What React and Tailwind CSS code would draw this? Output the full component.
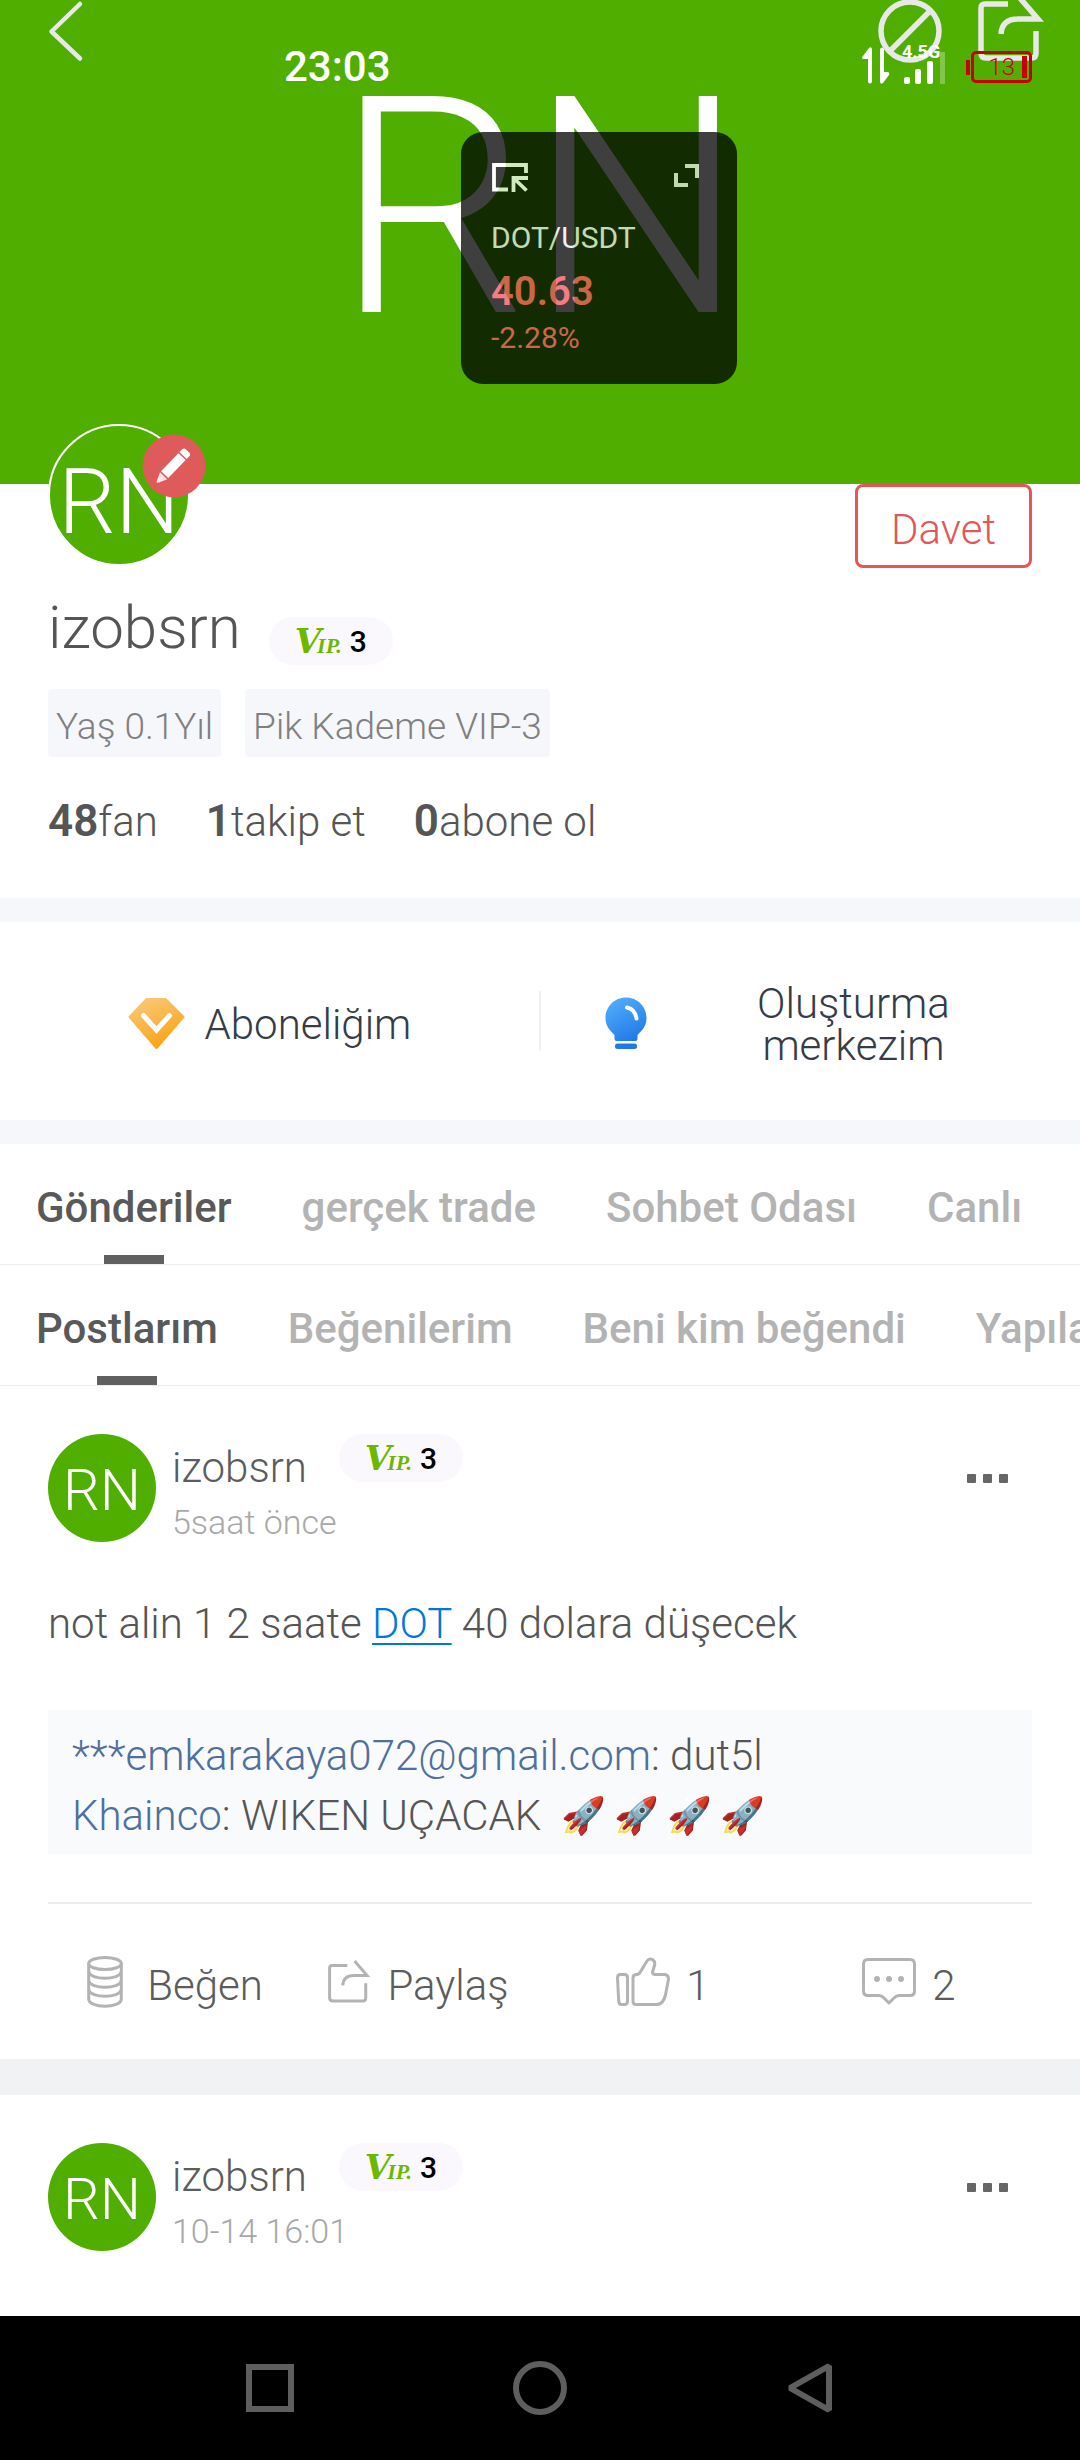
import React from "react";

function ShareIcon({ className, strokeWidth }) {
  return (
    <svg viewBox="0 -6 70 66" className={className} fill="none" stroke="currentColor" strokeWidth={strokeWidth} strokeLinejoin="round" aria-hidden="true">
      <path d="M34 2H11Q7 2 7 6V51Q7 56 12 56H58Q62 56 62 51V29" />
      <path d="M45 -5L64 17H44Q28 17 27 32" strokeLinejoin="miter" />
    </svg>
  );
}

function VipPill({ className = "" }) {
  return (
    <span className={`flex h-12 w-[124px] shrink-0 items-center justify-center gap-2 rounded-3xl bg-[#faf8fc] ${className}`}>
      <span className="flex items-baseline leading-none font-bold text-[#6cb800] italic">
        <span className="font-['DejaVu_Serif',serif] text-[34px] leading-none">V</span>
        <span className="-ml-1 font-['Liberation_Serif',serif] text-[22px] leading-none">IP.</span>
      </span>
      <span className="pt-[2px] text-[30px] leading-none font-medium text-black">3</span>
    </span>
  );
}

function TabRow({ label, tabs }) {
  return (
    <nav aria-label={label} className="flex h-[121px] gap-[70px] overflow-hidden border-b border-[#ececec] px-9">
      {tabs.map((tab, i) => (
        <button
          key={tab}
          type="button"
          className={
            i === 0
              ? "relative flex shrink-0 items-center pt-[6px] text-[42px] font-medium whitespace-nowrap text-[#595959]"
              : "relative flex shrink-0 items-center pt-[6px] text-[42px] font-medium whitespace-nowrap text-[#b3b3b3]"
          }
        >
          {tab}
          {i === 0 && <span className="absolute bottom-0 left-1/2 h-[9px] w-[60px] -translate-x-1/2 bg-[#606060]" />}
        </button>
      ))}
    </nav>
  );
}

function PostHeader({ time }) {
  return (
    <div className="flex items-start gap-4">
      <div className="flex size-[108px] shrink-0 items-center justify-center rounded-full bg-[#4fae00] pt-1 text-[58px] text-white">RN</div>
      <div className="flex min-w-0 flex-1 flex-col">
        <div className="flex items-start gap-8">
          <h2 className="pt-[10px] text-[42px] leading-[48px] text-[#5c5c5c]">izobsrn</h2>
          <VipPill />
        </div>
        <time className="mt-[10px] text-[34px] leading-10 text-[#a8a8a8]">{time}</time>
      </div>
      <button type="button" aria-label="Daha fazla" className="mt-10 mr-6 flex gap-[7px]">
        <span className="size-[9px] rounded-[1px] bg-[#666]" />
        <span className="size-[9px] rounded-[1px] bg-[#666]" />
        <span className="size-[9px] rounded-[1px] bg-[#666]" />
      </button>
    </div>
  );
}

function CoinsIcon() {
  return (
    <svg viewBox="0 0 36 52" className="mr-2 ml-2 h-[52px] w-9" fill="none" stroke="currentColor" strokeWidth="3" aria-hidden="true">
      <ellipse cx="18" cy="7.5" rx="16.3" ry="6" />
      <path d="M1.7 7.5V43C1.7 52.5 34.3 52.5 34.3 43V7.5" />
      <path d="M1.7 15.5C3 24.5 33 24.5 34.3 15.5M1.7 24.5C3 33.5 33 33.5 34.3 24.5M1.7 33.5C3 42.5 33 42.5 34.3 33.5" />
    </svg>
  );
}

function ThumbIcon() {
  return (
    <svg viewBox="0 0 54 50" className="h-[50px] w-[54px]" fill="none" stroke="currentColor" strokeWidth="3" strokeLinejoin="round" aria-hidden="true">
      <path d="M4.5 17.5H8.5Q11.5 17.5 11.5 20.5V44Q11.5 47.5 8.5 47.5H5.5Q3 47.5 2.7 44L1.5 21Q1.5 17.5 4.5 17.5Z" />
      <path d="M17 21Q17 18 20 17.5Q23 17.5 24 15.5L31 4Q33 1 36.5 2.5Q39.5 4.5 38.5 8.5L36.5 15Q36.5 17.5 39 17.5H49Q52.5 18 52.5 22L49.5 38Q47 47.5 41 47.5H20Q17 47.5 17 44Z" />
    </svg>
  );
}

function CommentIcon() {
  return (
    <svg viewBox="0 0 54 48" className="h-12 w-[54px]" aria-hidden="true">
      <path d="M6 1.5H48Q52.5 1.5 52.5 6V33Q52.5 37.5 48 37.5H37Q34.5 37.5 32 40L27 45L22 40Q19.5 37.5 17 37.5H6Q1.5 37.5 1.5 33V6Q1.5 1.5 6 1.5Z" fill="none" stroke="currentColor" strokeWidth="3" strokeLinejoin="round" />
      <g fill="currentColor">
        <circle cx="15" cy="21" r="3" />
        <circle cx="27" cy="21" r="3" />
        <circle cx="39" cy="21" r="3" />
      </g>
    </svg>
  );
}

function PostAction({ icon, label }) {
  return (
    <button type="button" className="flex flex-1 items-center justify-center gap-4 text-[#b3b3b3]">
      {icon}
      <span className="pt-2 text-[42px] leading-[48px] text-[#5c5c5c]">{label}</span>
    </button>
  );
}

function StatusBar() {
  return (
    <div className="absolute inset-x-0 top-10 flex items-center justify-between pr-12 pl-[284px] text-white">
      <time className="text-[42px] leading-[54px] font-medium">23:03</time>
      <div className="flex items-center gap-5">
        <div className="-mt-2 flex items-end gap-3">
          <svg viewBox="0 0 28 37" className="h-[37px] w-7" fill="currentColor" aria-hidden="true">
            <path d="M6 35V12H1Q-1 11 1 9L7 1Q10 -1 10 3V35Q8 38 6 35Z" />
            <path d="M18 2V34Q18 38 21 36L27 28Q28 26 26 25H22V2Q20 -1 18 2Z" />
          </svg>
          <div className="flex flex-col">
            <span className="text-[18px] leading-[18px] font-bold">4.5G</span>
            <svg viewBox="0 0 44 32" className="-mt-[9px] h-8 w-11" fill="currentColor" aria-hidden="true">
              <rect x="2" y="25" width="6" height="7" rx="2" />
              <rect x="13" y="17" width="6" height="15" rx="2" />
              <rect x="25" y="9" width="6" height="23" rx="2" />
              <rect x="38" y="0" width="5" height="32" rx="1" opacity="0.3" />
            </svg>
          </div>
        </div>
        <div className="flex items-center text-[#c80000]">
          <span className="h-[15px] w-1 bg-[#c80000]" />
          <span className="ml-[1px] flex h-8 w-[61px] items-center justify-end gap-[7px] rounded-[5px] border-[3px] border-[#c80000] pr-[2px] text-[24px] leading-none">
            13
            <span className="h-[22px] w-[5px] bg-[#c80000]" />
          </span>
        </div>
      </div>
    </div>
  );
}

function PriceWidget() {
  return (
    <aside className="absolute top-[132px] left-[461px] flex h-[252px] w-[276px] flex-col rounded-[22px] bg-black px-[30px] pt-[31px] font-normal opacity-75">
      <div className="flex items-start justify-between pr-2">
        <svg viewBox="0 0 37 29" className="h-[29px] w-[37px]" fill="none" stroke="white" strokeWidth="3.8" aria-hidden="true">
          <path d="M35 10V2H3V26.5H17" />
          <path d="M22.5 29V15H37M23 15.5L35.5 27.5" />
        </svg>
        <svg viewBox="0 0 25 24" className="h-6 w-[25px]" fill="none" stroke="#e8e8e8" strokeWidth="4" aria-hidden="true">
          <path d="M11 3H23V15M2 10V22H14" />
        </svg>
      </div>
      <span className="mt-7 text-[30px] leading-9 text-[#ebebeb]">DOT/USDT</span>
      <span className="mt-3 text-[40px] leading-[48px] font-semibold text-[#f5505c]">40.63</span>
      <span className="mt-1 text-[30px] leading-9 text-[#f5505c]">-2.28%</span>
    </aside>
  );
}

export default function App() {
  return (
    <div className="flex min-h-screen flex-col overflow-x-hidden bg-white font-['Roboto','Noto_Sans',sans-serif] font-[350] text-[#555]">
      <header className="relative h-[484px] bg-[#4fae00]">
        <div className="pt-14 text-center text-[304px] leading-none text-white">RN</div>
        <div className="absolute inset-x-0 top-0 flex items-start justify-between pr-9 pl-12 text-[#e8e8e8]">
          <button type="button" aria-label="Geri">
            <svg viewBox="0 0 36 62" className="h-[62px] w-9" fill="none" stroke="currentColor" strokeWidth="4.5" strokeLinecap="round" strokeLinejoin="round" aria-hidden="true">
              <path d="M32 4L3.5 31.5L32 58.5" />
            </svg>
          </button>
          <div className="flex gap-8">
            <button type="button" aria-label="Engelle">
              <svg viewBox="0 0 64 64" className="size-16" fill="none" stroke="currentColor" strokeWidth="5.5" aria-hidden="true">
                <circle cx="32" cy="31" r="29" />
                <path d="M12 51L52 11" />
              </svg>
            </button>
            <button type="button" aria-label="Paylaş" className="-mt-[6px]">
              <ShareIcon className="h-[66px] w-[70px]" strokeWidth="5.5" />
            </button>
          </div>
        </div>
        <StatusBar />
        <PriceWidget />
      </header>

      <section className="px-12 pb-[52px]">
        <div className="flex h-[84px] items-start justify-between">
          <div className="relative -mt-[60px]">
            <div className="flex size-[142px] items-center justify-center rounded-full border-2 border-white bg-[#4fae00] pt-4 text-[90px] leading-none text-white">RN</div>
            <button type="button" aria-label="Düzenle" className="absolute top-[10px] left-[94px]">
              <svg viewBox="0 0 64 64" className="size-16" aria-hidden="true">
                <circle cx="32" cy="32" r="31.5" fill="#df5b5b" />
                <g transform="translate(31 32) rotate(44)" fill="white">
                  <path d="M-5 -14.5V-18Q-5 -21 -2.5 -21H2.5Q5 -21 5 -18V-14.5Z" />
                  <path d="M-5 -13H5V12H-5Z" />
                  <path d="M-5 13.5H5L0.8 23H-0.8Z" opacity="0.85" />
                </g>
              </svg>
            </button>
          </div>
          <button type="button" className="h-[84px] w-[177px] rounded-lg border-[3px] border-[#e25757] pt-2 text-[42px] leading-none text-[#e25757]">Davet</button>
        </div>
        <div className="mt-[30px] flex items-start gap-7">
          <h1 className="text-[60px] leading-[60px]">izobsrn</h1>
          <VipPill className="mt-[19px]" />
        </div>
        <div className="mt-6 flex gap-6 text-[37px] leading-[44px] text-[#808080]">
          <span className="rounded bg-[#f6f7fa] px-2 pt-4 pb-2">Yaş 0.1Yıl</span>
          <span className="rounded bg-[#f6f7fa] px-2 pt-4 pb-2">Pik Kademe VIP-3</span>
        </div>
        <div className="mt-10 flex gap-12 text-[42px] leading-[48px]">
          <span><b className="text-[44px] font-semibold">48</b>fan</span>
          <span><b className="text-[44px] font-semibold">1</b>takip et</span>
          <span><b className="text-[44px] font-semibold">0</b>abone ol</span>
        </div>
      </section>

      <section className="flex items-center border-y-24 border-[#f5f7fa] text-[42px] leading-[42px] text-[#353b47]">
        <a href="#abonelik" className="flex h-[198px] w-1/2 items-center justify-center gap-5 pt-1">
          <svg viewBox="0 0 57 53" className="h-[53px] w-[57px]" aria-hidden="true">
            <defs>
              <linearGradient id="gem" x1="0.2" y1="0" x2="0.7" y2="1">
                <stop offset="0" stopColor="#f9c97c" />
                <stop offset="1" stopColor="#fba00c" />
              </linearGradient>
            </defs>
            <path d="M18 1H38L56 19Q57 20 56 21L30 51Q28.5 53 27 51L1 21Q0 20 1 19Z" fill="url(#gem)" />
            <path d="M15.5 18.5L28.5 33L41.5 18.5" fill="none" stroke="white" strokeWidth="5" strokeLinecap="round" />
          </svg>
          <span className="pt-1">Aboneliğim</span>
        </a>
        <span className="h-[60px] w-[2px] bg-[#f0f1f3]" />
        <a href="#merkez" className="flex h-[198px] w-1/2 items-center gap-7 pt-1 pr-12 pl-16">
          <svg viewBox="0 0 42 53" className="h-[53px] w-[42px] shrink-0" aria-hidden="true">
            <defs>
              <linearGradient id="bulb" x1="0.2" y1="0" x2="0.7" y2="1">
                <stop offset="0" stopColor="#55adfb" />
                <stop offset="1" stopColor="#1f7ae8" />
              </linearGradient>
            </defs>
            <path d="M21 0.5C9.5 0.5 0.5 9.5 0.5 21C0.5 30 6 34 9.5 38V42Q9.5 44 11.5 44H30.5Q32.5 44 32.5 42V38C36 34 41.5 30 41.5 21C41.5 9.5 32.5 0.5 21 0.5Z" fill="url(#bulb)" />
            <rect x="10" y="46.5" width="22" height="5.5" rx="2.5" fill="#1f7ae8" />
            <path d="M22 10.5Q30 12 31.5 21.5" fill="none" stroke="white" strokeWidth="4" strokeLinecap="round" />
          </svg>
          <span className="flex-1 pt-1 text-center">
            Oluşturma<br />merkezim
          </span>
        </a>
      </section>

      <TabRow label="Profil" tabs={["Gönderiler", "gerçek trade", "Sohbet Odası", "Canlı"]} />
      <TabRow label="Gönderi türü" tabs={["Postlarım", "Beğenilerim", "Beni kim beğendi", "Yapılan yorumlar"]} />

      <main className="flex-1">
        <article className="border-b-36 border-[#f1f2f4] px-12 pt-12">
          <PostHeader time="5saat önce" />
          <p className="mt-[52px] text-[42px] leading-[60px]">
            not alin 1 2 saate{" "}
            <a href="#dot" className="text-[#0077e0] underline decoration-[2px] underline-offset-[5px]">DOT</a> 40 dolara düşecek
          </p>
          <div className="mt-14 bg-[#f9fafc] px-6 pt-4 pb-2 text-[42px] leading-[60px]">
            <p><span className="text-[#4f6f9c]">***emkarakaya072@gmail.com</span>: dut5l</p>
            <p className="flex">
              <span><span className="text-[#4f6f9c]">Khainco</span>: WIKEN UÇACAK</span>
              <span className="ml-5 flex gap-2 text-[36px]">
                <span>🚀</span>
                <span>🚀</span>
                <span>🚀</span>
                <span>🚀</span>
              </span>
            </p>
          </div>
          <div className="mt-12 flex h-[157px] border-t-2 border-[#ececec]">
            <PostAction icon={<CoinsIcon />} label="Beğen" />
            <PostAction icon={<ShareIcon className="h-[44px] w-[46px]" strokeWidth="4.5" />} label="Paylaş" />
            <PostAction icon={<ThumbIcon />} label="1" />
            <PostAction icon={<CommentIcon />} label="2" />
          </div>
        </article>
        <article className="px-12 pt-12 pb-14">
          <PostHeader time="10-14 16:01" />
        </article>
      </main>

      <nav aria-label="Sistem" className="flex h-36 items-center bg-black px-[135px] text-[#5e5e5e]">
        <button type="button" aria-label="Son uygulamalar" className="flex flex-1 justify-center">
          <span className="size-12 border-[6px] border-[#5e5e5e]" />
        </button>
        <button type="button" aria-label="Ana ekran" className="flex flex-1 justify-center">
          <span className="size-[54px] rounded-full border-[6px] border-[#5e5e5e]" />
        </button>
        <button type="button" aria-label="Geri" className="flex flex-1 justify-center">
          <svg viewBox="0 0 46 54" className="h-[54px] w-[46px]" fill="none" stroke="currentColor" strokeWidth="6" aria-hidden="true">
            <path d="M42 5V49L3 27Z" strokeLinejoin="bevel" />
          </svg>
        </button>
      </nav>
    </div>
  );
}
